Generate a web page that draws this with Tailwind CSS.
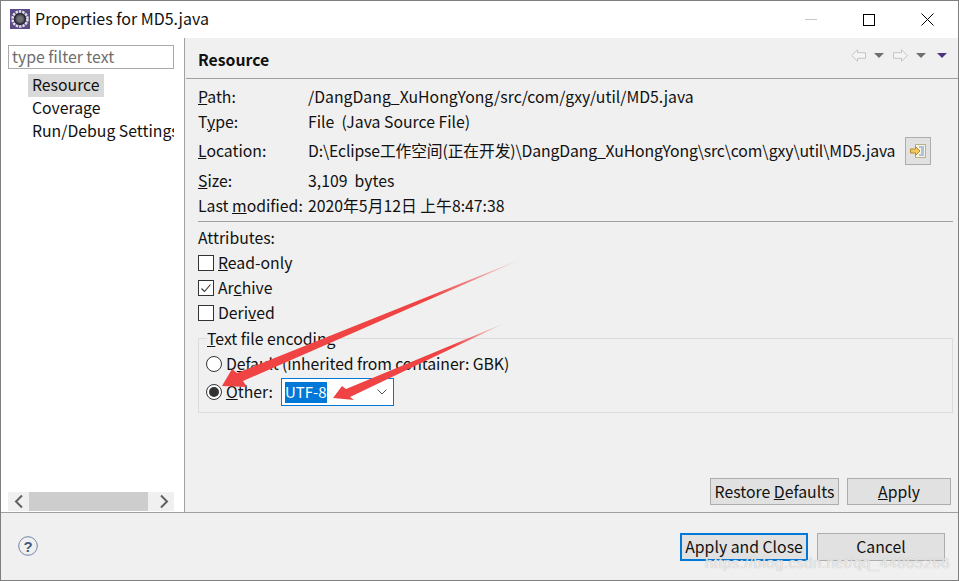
<!DOCTYPE html>
<html lang="en">
  <head>
    <meta charset="UTF-8" />
    <title>Properties for MD5.java</title>
    <script src="https://cdn.jsdelivr.net/npm/@tailwindcss/browser@4"></script>
  </head>
  <body class="bg-white overflow-hidden">
    <div class="relative w-[959px] h-[581px] flex flex-col border border-[#7f7f7f] text-[15.8px] leading-[20px] text-[#111] font-['Noto_Sans_CJK_SC','Noto_Sans',sans-serif]">
      <!-- title bar -->
      <div class="h-[37px] flex items-center bg-white shrink-0">
        <svg class="ml-[9px] w-5 h-5 -mt-[1px]" viewBox="0 0 20 20">
          <rect width="20" height="20" fill="#5b4a86" />
          <circle cx="10" cy="10" r="7.500" fill="none" stroke="#e2e2e6" stroke-width="2.500" stroke-dasharray="2.400 1" />
          <circle cx="10" cy="10" r="5.300" fill="#55565c" stroke="#2a2a30" stroke-width="1.600" />
          <circle cx="10" cy="10" r="3" fill="#6f6f78" />
        </svg>
        <span class="ml-[5px] -mt-[3px] text-[16px]">Properties for MD5.java</span>
        <div class="ml-auto flex items-center">
          <div class="w-3 h-px bg-[#c8c8c8] mr-[46px] -mt-[1px]"></div>
          <div class="w-3 h-3 border border-black mr-[46px]"></div>
          <svg class="w-[13px] h-[13px] mr-[24px]" viewBox="0 0 13 13"><path d="M.5.5l12 12M12.5.5l-12 12" stroke="#000" fill="none" /></svg>
        </div>
      </div>

      <div class="h-[474px] flex shrink-0">
        <!-- left tree -->
        <div class="w-[184px] bg-white border-r border-[#a0a0a0] pl-[7px] pr-[10px] pt-[7px] flex flex-col shrink-0">
          <div class="h-[24px] border border-[#a9a9a9] px-[3px] flex items-center text-[#6d6d6d]">type filter text</div>
          <div class="mt-[5px] ml-[20px] w-[76px] h-[23px] pl-[4px] pb-[2px] bg-[#d9d9d9] flex items-center">Resource</div>
          <div class="ml-[20px] h-[23px] pl-[4px] pb-[2px] flex items-center">Coverage</div>
          <div class="ml-[20px] h-[23px] pl-[4px] pb-[2px] flex items-center overflow-hidden whitespace-nowrap">Run/Debug Settings</div>
          <div class="mt-auto mb-px h-[19px] bg-[#f0f0f0] flex items-center">
            <svg class="w-[21px] h-[19px] shrink-0" viewBox="0 0 21 19"><path d="M14 3.500L8 9.500l6 6" fill="none" stroke="#606060" stroke-width="2" /></svg>
            <div class="w-[119px] h-[19px] bg-[#cdcdcd]"></div>
            <svg class="w-[26px] h-[19px] shrink-0" viewBox="0 0 26 19"><path d="M13 3.500l6 6-6 6" fill="none" stroke="#606060" stroke-width="2" /></svg>
          </div>
        </div>

        <!-- right pane -->
        <div class="flex-1 bg-[#f0f0f0] flex flex-col">
          <div class="h-[41px] ml-px border-b border-[#a0a0a0] flex items-center justify-between pl-[12px] pr-[11px] shrink-0">
            <span class="font-bold text-[15.8px] mt-[3px]">Resource</span>
            <div class="flex items-center -mt-[5px]">
              <svg class="w-[15px] h-[13px]" viewBox="0 0 15 13"><path d="M.7 6.500L6.500.7v3h8v5.600h-8v3z" fill="#f4f4f4" stroke="#c4c4c4" /></svg>
              <div class="ml-[8px] w-0 h-0 border-x-[5px] border-x-transparent border-t-[5px] border-t-[#707070]"></div>
              <svg class="ml-[9px] w-[15px] h-[13px]" viewBox="0 0 15 13"><path d="M14.300 6.500L8.500.7v3h-8v5.600h8v3z" fill="#f4f4f4" stroke="#c4c4c4" /></svg>
              <div class="ml-[8px] w-0 h-0 border-x-[5px] border-x-transparent border-t-[5px] border-t-[#707070]"></div>
              <div class="ml-[11px] w-0 h-0 border-x-[5px] border-x-transparent border-t-[5px] border-t-[#4a3480]"></div>
            </div>
          </div>

          <div class="pl-[13px] pr-[5px] flex flex-col flex-1">
            <div class="grid grid-cols-[110px_1fr] auto-rows-min pt-[5px]">
              <div class="h-[25px] flex items-center"><span><u>P</u>ath:</span></div>
              <div class="h-[25px] flex items-center">/DangDang_XuHongYong/src/com/gxy/util/MD5.java</div>
              <div class="h-[25px] flex items-center"><span>T<u>y</u>pe:</span></div>
              <div class="h-[25px] flex items-center">File&nbsp; (Java Source File)</div>
              <div class="h-[33px] flex items-center"><span><u>L</u>ocation:</span></div>
              <div class="h-[33px] flex items-center justify-between pr-[22px]">
                <span class="whitespace-nowrap tracking-[-0.15px]">D:\Eclipse工作空间(正在开发)\DangDang_XuHongYong\src\com\gxy\util\MD5.java</span>
                <div class="w-[26px] h-[28px] bg-[#e1e1e1] border border-[#adadad] flex items-center justify-center shrink-0">
                  <svg class="w-4 h-4" viewBox="0 0 16 16">
                    <rect x="5.500" y="1.500" width="10" height="13" fill="#f4f4e8" stroke="#b9b18a" />
                    <path d="M9 4h5M11 6h3M11 8h3M11 10h3M9 12h5" stroke="#6f8fc8" />
                    <path d="M.5 6h5V3.500L10 8l-4.500 4.500V10h-5z" fill="#f0c860" stroke="#b48a2c" />
                  </svg>
                </div>
              </div>
              <div class="h-[26px] pt-[2px] flex items-center"><span><u>S</u>ize:</span></div>
              <div class="h-[26px] pt-[2px] flex items-center">3,109&nbsp; bytes</div>
              <div class="h-[25px] flex items-center"><span>Last <u>m</u>odified:</span></div>
              <div class="h-[25px] flex items-center">2020年5月12日 上午8:47:38</div>
            </div>

            <div class="mt-[3px] h-px bg-[#a0a0a0]"></div>
            <div class="mt-[5px] h-[21px] flex items-center">Attributes:</div>

            <div class="mt-[2px] h-[25px] flex items-center gap-[4px]">
              <div class="w-4 h-4 bg-white border border-[#333]"></div><span><u>R</u>ead-only</span>
            </div>
            <div class="h-[25px] flex items-center gap-[4px]">
              <div class="w-4 h-4 bg-white border border-[#333] flex items-center justify-center">
                <svg class="w-3 h-3" viewBox="0 0 12 12"><path d="M1.500 6.500L4.500 9.500 10.500 2.500" fill="none" stroke="#333" stroke-width="1.100" /></svg>
              </div><span>Ar<u>c</u>hive</span>
            </div>
            <div class="h-[25px] flex items-center gap-[4px]">
              <div class="w-4 h-4 bg-white border border-[#333]"></div><span>Deri<u>v</u>ed</span>
            </div>

            <div class="relative mt-[13px] h-[75px] border border-[#dcdcdc] pl-[7px] pt-[12px]">
              <div class="absolute left-[8px] -top-[10px] h-5 bg-[#f0f0f0] flex items-center"><span><u>T</u>ext file encoding</span></div>
              <div class="h-[25px] flex items-center gap-[4px]">
                <div class="w-4 h-4 rounded-full bg-white border border-[#333]"></div><span class="tracking-[-0.1px]">D<u>e</u>fault (inherited from container: GBK)</span>
              </div>
              <div class="mt-[2px] h-[28px] flex items-center">
                <div class="w-4 h-4 rounded-full bg-white border border-[#333] flex items-center justify-center">
                  <div class="w-[10px] h-[10px] rounded-full bg-[#333]"></div>
                </div>
                <span class="ml-[4px] w-[55px]"><u>O</u>ther:</span>
                <div class="w-[113px] h-[28px] bg-white border border-[#0078d7] pl-[3px] pr-[6px] flex items-center justify-between">
                  <span class="bg-[#0078d7] text-white text-[15px] h-[21px] flex items-center">UTF-8</span>
                  <svg class="w-[10px] h-[6px]" viewBox="0 0 10 6"><path d="M.5.5L5 5 9.500.5" fill="none" stroke="#555" /></svg>
                </div>
              </div>
            </div>

            <div class="mt-auto mb-[7px] flex justify-end gap-[8px] pr-[2px]">
              <div class="w-[129px] h-[27px] bg-[#e1e1e1] border border-[#adadad] flex items-center justify-center"><span>Restore <u>D</u>efaults</span></div>
              <div class="w-[104px] h-[27px] bg-[#e1e1e1] border border-[#adadad] flex items-center justify-center"><span><u>A</u>pply</span></div>
            </div>
          </div>
        </div>
      </div>

      <!-- bottom bar -->
      <div class="flex-1 bg-[#f0f0f0] border-t border-[#a0a0a0] flex items-center pl-[17px] pr-[13px]">
        <svg class="w-5 h-5 -mt-[2px]" viewBox="0 0 20 20">
          <circle cx="10" cy="10" r="9.300" fill="none" stroke="#6f84a8" />
          <text x="10" y="15.500" text-anchor="middle" font-size="15" font-weight="700" fill="#44597f" font-family="Liberation Sans">?</text>
        </svg>
        <div class="ml-auto flex gap-[9px] mt-[1px]">
          <div class="w-[128px] h-[28px] bg-[#e1e1e1] border-2 border-[#0078d7] flex items-center justify-center">Apply and Close</div>
          <div class="w-[128px] h-[28px] bg-[#e1e1e1] border border-[#adadad] flex items-center justify-center">Cancel</div>
        </div>
      </div>

      <!-- red annotation arrows drawn over the dialog -->
      <svg class="absolute -left-px -top-px pointer-events-none" width="959" height="581" viewBox="0 0 959 581">
        <defs>
          <linearGradient id="a1" x1="222" y1="385" x2="522" y2="259" gradientUnits="userSpaceOnUse">
            <stop offset="0" stop-color="#f04444" /><stop offset=".7" stop-color="#f04444" /><stop offset="1" stop-color="#f04444" stop-opacity=".1" />
          </linearGradient>
          <linearGradient id="a2" x1="333" y1="398" x2="505" y2="323" gradientUnits="userSpaceOnUse">
            <stop offset="0" stop-color="#f04444" /><stop offset=".7" stop-color="#f04444" /><stop offset="1" stop-color="#f04444" stop-opacity=".1" />
          </linearGradient>
        </defs>
        <path d="M222 386L232 369 237 373 522 259 243 381 247 387z" fill="url(#a1)" />
        <path d="M333 398L342 386 346 389 505 323 350 397 354 400z" fill="url(#a2)" />
      </svg>

      <div class="absolute left-[704px] top-[552px] text-[15px] leading-[20px] tracking-[0.45px] text-white/70 [text-shadow:0_0_1px_#aaa] font-['Liberation_Sans',sans-serif] whitespace-nowrap">https://blog.csdn.net/qq_44865266</div>
    </div>
  </body>
</html>
